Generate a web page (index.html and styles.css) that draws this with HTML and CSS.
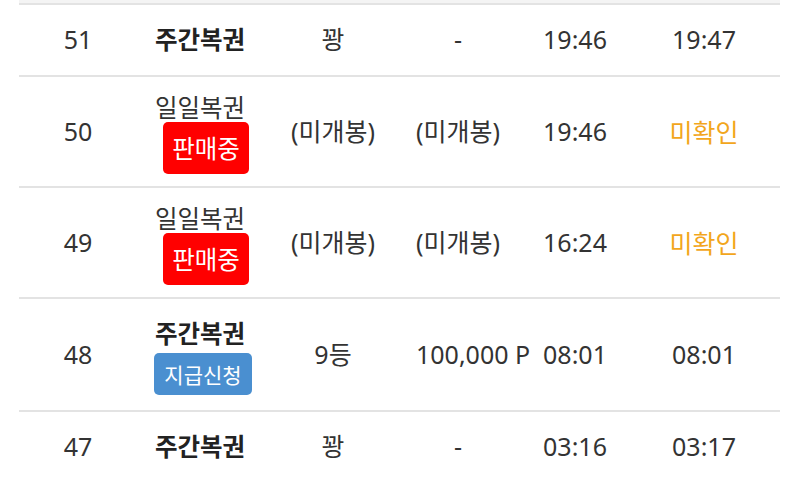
FILE: index.html
```html
<!DOCTYPE html>
<html lang="ko">
<head>
<meta charset="utf-8">
<link rel="stylesheet" href="styles.css">
</head>
<body>
<div class="table">
  <div class="top-strip"></div>
  <div class="row row-short">
    <div class="cell">51</div>
    <div class="cell"><span class="type bold">주간복권</span></div>
    <div class="cell">꽝</div>
    <div class="cell prize">-</div>
    <div class="cell">19:46</div>
    <div class="cell">19:47</div>
  </div>
  <div class="row row-tall">
    <div class="cell">50</div>
    <div class="cell stack"><span class="type">일일복권</span><span class="badge badge-red">판매중</span></div>
    <div class="cell">(미개봉)</div>
    <div class="cell prize">(미개봉)</div>
    <div class="cell">19:46</div>
    <div class="cell pending">미확인</div>
  </div>
  <div class="row row-tall">
    <div class="cell">49</div>
    <div class="cell stack"><span class="type">일일복권</span><span class="badge badge-red">판매중</span></div>
    <div class="cell">(미개봉)</div>
    <div class="cell prize">(미개봉)</div>
    <div class="cell">16:24</div>
    <div class="cell pending">미확인</div>
  </div>
  <div class="row row-tall2">
    <div class="cell">48</div>
    <div class="cell stack"><span class="type bold">주간복권</span><span class="badge badge-blue">지급신청</span></div>
    <div class="cell">9등</div>
    <div class="cell prize">100,000 P</div>
    <div class="cell">08:01</div>
    <div class="cell">08:01</div>
  </div>
  <div class="row row-short">
    <div class="cell">47</div>
    <div class="cell"><span class="type bold">주간복권</span></div>
    <div class="cell">꽝</div>
    <div class="cell prize">-</div>
    <div class="cell">03:16</div>
    <div class="cell">03:17</div>
  </div>
</div>
</body>
</html>
```

FILE: styles.css
```css
html, body {
  margin: 0;
  padding: 0;
  background: #ffffff;
}
body {
  font-family: "Noto Sans", "Noto Sans CJK KR", sans-serif;
  color: #333333;
  font-size: 25px;
}
.table {
  margin: 0 20px 0 19px;
}
.top-strip {
  height: 3px;
  background: #f4f4f4;
}
.row {
  display: grid;
  grid-template-columns: 118px 126px 140px 110px 124px 134px 1fr;
  border-top: 2px solid #e3e3e3;
}
.row-short { height: 70px; }
.row-tall { height: 109px; }
.row-tall2 { height: 111px; }
.cell {
  display: flex;
  align-items: center;
  justify-content: safe center;
  white-space: nowrap;
  line-height: 30px;
  padding-bottom: 2px;
  min-width: 0;
}
.prize {
  padding-left: 13px;
  padding-right: 13px;
  overflow: visible;
}
.stack {
  flex-direction: column;
  padding-bottom: 0;
  padding-top: 4px;
}
.type {
  font-family: "Noto Sans CJK KR", sans-serif;
  font-size: 24.5px;
  line-height: 28px;
}
.bold {
  font-weight: 700;
  color: #222222;
}
.badge {
  font-family: "Noto Sans CJK KR", sans-serif;
  color: #ffffff;
  border-radius: 5px;
}
.badge-red {
  background: #ff0000;
  font-size: 24.5px;
  line-height: 32px;
  padding: 10px 9px;
  margin-top: 1px;
  margin-left: 12px;
}
.badge-blue {
  background: #4a8fd0;
  font-size: 21px;
  line-height: 28px;
  padding: 7px 10px;
  margin-top: 6px;
  margin-left: 6px;
}
.pending {
  color: #f2a61c;
  font-family: "Noto Sans CJK KR", sans-serif;
  font-size: 25px;
}
```
